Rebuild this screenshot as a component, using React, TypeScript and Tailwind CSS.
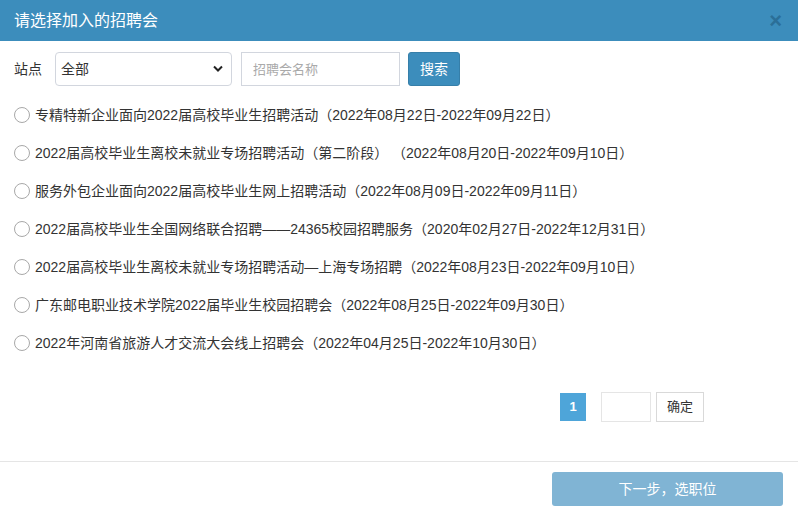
const font = {
  fontFamily: '"Liberation Sans", "Noto Sans CJK SC", sans-serif',
};

const fairs = [
  "专精特新企业面向2022届高校毕业生招聘活动（2022年08月22日-2022年09月22日）",
  "2022届高校毕业生离校未就业专场招聘活动（第二阶段） （2022年08月20日-2022年09月10日）",
  "服务外包企业面向2022届高校毕业生网上招聘活动（2022年08月09日-2022年09月11日）",
  "2022届高校毕业生全国网络联合招聘——24365校园招聘服务（2020年02月27日-2022年12月31日）",
  "2022届高校毕业生离校未就业专场招聘活动—上海专场招聘（2022年08月23日-2022年09月10日）",
  "广东邮电职业技术学院2022届毕业生校园招聘会（2022年08月25日-2022年09月30日）",
  "2022年河南省旅游人才交流大会线上招聘会（2022年04月25日-2022年10月30日）",
];

export default function App() {
  return (
    <div className="w-[798px] h-[513px] bg-white flex flex-col text-[#333]" style={font}>
      <div className="h-[41px] bg-[#3c8dbc] flex items-center justify-between pl-[14px] pr-[16px] shrink-0">
        <span className="text-white text-[16px]">请选择加入的招聘会</span>
        <span className="text-[#2b6f98] text-[22px] font-bold leading-none">×</span>
      </div>

      <div className="flex items-center mt-[11px] px-[14px] h-[34px]">
        <span className="text-[14px] w-[41px]">站点</span>
        <div className="relative w-[177px] h-[34px]">
          <select className="w-full h-full border border-[#d2d6de] rounded-[4px] pl-[5px] text-[14px] text-[#333] bg-white appearance-none outline-none">
            <option>全部</option>
          </select>
          <svg className="absolute right-[9px] top-[13px]" width="10" height="8" viewBox="0 0 10 8">
            <path d="M1 1.5 L5 5.5 L9 1.5" stroke="#222" strokeWidth="2" fill="none" />
          </svg>
        </div>
        <input
          className="ml-[9px] w-[159px] h-[34px] border border-[#d2d6de] px-[11px] text-[13px] placeholder:text-[#aaa] outline-none"
          placeholder="招聘会名称"
        />
        <button className="ml-[8px] w-[52px] h-[34px] bg-[#3c8dbc] border border-[#367fa9] rounded-[3px] text-white text-[14px]">
          搜索
        </button>
      </div>

      <ul className="mt-[18px] px-[14px] flex flex-col gap-[16px]">
        {fairs.map((f) => (
          <li key={f} className="flex items-center h-[22px] text-[14px] text-[#333]">
            <span className="w-[16px] h-[16px] rounded-full border border-[#a8a8a8] bg-white shrink-0" />
            <span className="ml-[5px] whitespace-pre">{f}</span>
          </li>
        ))}
      </ul>

      <div className="flex items-center mt-[38px] pl-[560px] h-[30px]">
        <span className="w-[26px] h-[28px] bg-[#4ea5d9] text-white text-[13px] font-bold flex items-center justify-center">
          1
        </span>
        <span className="ml-[15px] w-[50px] h-[30px] border border-[#e5e5e5] bg-white" />
        <button className="ml-[5px] w-[48px] h-[30px] border border-[#d9d9d9] bg-white text-[13px] text-[#333]">
          确定
        </button>
      </div>

      <div className="mt-[39px] border-t border-[#e5e5e5]" />
      <div className="flex justify-end pr-[15px] pt-[10px]">
        <button className="w-[231px] h-[34px] bg-[#80b4d4] rounded-[3px] text-white text-[14px]">
          下一步，选职位
        </button>
      </div>
    </div>
  );
}
